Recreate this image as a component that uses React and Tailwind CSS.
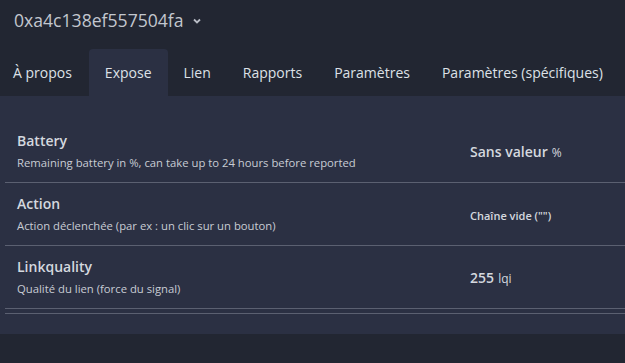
import React from 'react';

const tabs = ['À propos', 'Expose', 'Lien', 'Rapports', 'Paramètres', 'Paramètres (spécifiques)'];

const rows = [
  {
    name: 'Battery',
    desc: 'Remaining battery in %, can take up to 24 hours before reported',
    value: <><span className="text-[14px] font-semibold">Sans valeur</span> <span className="text-[12px]">%</span></>,
  },
  {
    name: 'Action',
    desc: 'Action déclenchée (par ex : un clic sur un bouton)',
    value: <span className="text-[11px] font-semibold">Chaîne vide ("")</span>,
  },
  {
    name: 'Linkquality',
    desc: 'Qualité du lien (force du signal)',
    value: <><span className="text-[14px] font-semibold">255</span> <span className="text-[12px]">lqi</span></>,
  },
];

const App = () => {
  return (
    <div className="w-[625px] h-[363px] overflow-hidden bg-[#222632] text-[#d4d8df]" style={{ fontFamily: '"Open Sans", "Noto Sans", sans-serif' }}>
      <div className="h-[49px] flex items-start pl-[14px] pt-[7px]">
        <span className="text-[17.6px] text-[#c3c7cf] leading-[26px]">0xa4c138ef557504fa</span>
        <svg className="ml-[8px] mt-[10px]" width="10" height="8" viewBox="0 0 10 8">
          <path d="M2 2.5 L5 5.5 L8 2.5" stroke="#b8bcc5" strokeWidth="1.8" fill="none" />
        </svg>
      </div>
      <div className="flex h-[47px]">
        {tabs.map((t, i) => (
          <div
            key={t}
            className={
              'px-[16px] flex items-center text-[14px] rounded-t-[4px] ' +
              (i === 1 ? 'bg-[#2b3043] text-[#dde1e7]' : 'text-[#dde1e7]')
            }
            style={i === 0 ? { paddingLeft: 13, paddingRight: 17 } : undefined}
          >
            {t}
          </div>
        ))}
      </div>
      <div className="bg-[#2b3043] h-[238px] pl-[5px] pt-[24px]">
        <div className="border-b border-[#5b6071] pb-[4px]">
          {rows.map((r) => (
            <div key={r.name} className="flex items-center h-[63px] border-b border-[#5b6071]">
              <div className="w-[465px] pl-[12px] flex flex-col">
                <span className="text-[14px] font-semibold leading-[20px] text-[#d4d8df]">{r.name}</span>
                <span className="text-[11.3px] leading-[16px] mt-[4px] text-[#c8ccd4]">{r.desc}</span>
              </div>
              <div className="text-[#d4d8df]">{r.value}</div>
            </div>
          ))}
        </div>
      </div>
    </div>
  );
};

export default App;
